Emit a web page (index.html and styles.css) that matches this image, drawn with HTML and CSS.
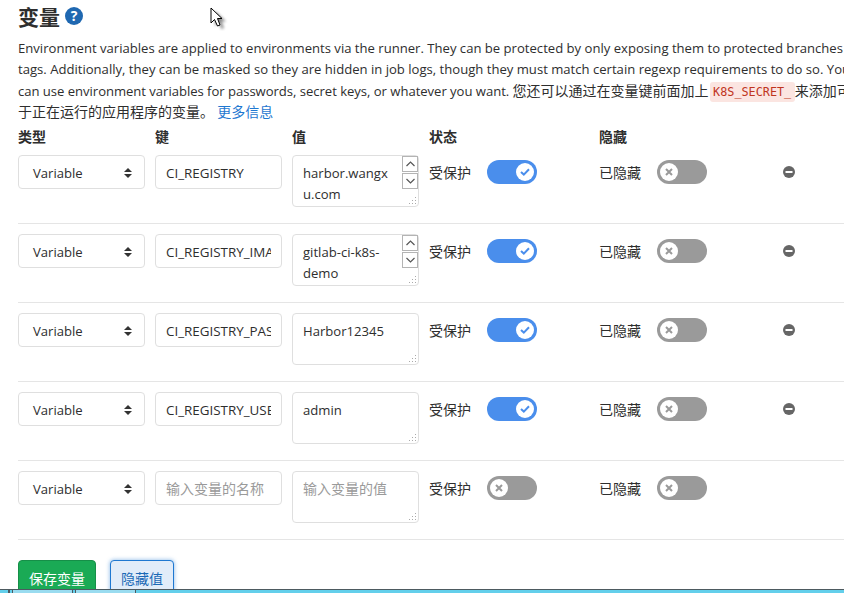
FILE: index.html
```html
<!DOCTYPE html>
<html lang="en">
<head>
<meta charset="UTF-8">
<title>变量</title>
<link rel="stylesheet" href="styles.css">
</head>
<body>
<div class="container">
    <div class="heading">
        <h4>变量</h4>
        <svg class="help" width="18" height="18" viewBox="0 0 18 18"><circle cx="9" cy="9" r="9" fill="#1f68b1"/><text x="9" y="14" text-anchor="middle" class="help-mark">?</text></svg>
    </div>
    <p class="intro">
        <span class="line">Environment variables are applied to environments via the runner. They can be protected by only exposing them to protected branches or</span>
        <span class="line">tags. Additionally, they can be masked so they are hidden in job logs, though they must match certain regexp requirements to do so. You</span>
        <span class="line"><span class="tight">can use environment variables for passwords, secret keys, or whatever you want. </span><span class="cjk">您还可以通过在变量键前面加上</span><code>K8S_SECRET_</code><span class="cjk">来添加可用</span></span>
        <span class="line cjk">于正在运行的应用程序的变量。 <a href="#">更多信息</a></span>
    </p>

    <div class="titles cjk">
        <div class="col-field">类型</div>
        <div class="col-field">键</div>
        <div class="col-field">值</div>
        <div class="col-status">状态</div>
        <div class="col-mask">隐藏</div>
    </div>

    <div class="row">
        <div class="select"><span>Variable</span><svg width="8" height="10" viewBox="0 0 8 10"><path d="M4 0 8 4H0ZM4 10 0 6H8Z" fill="#333"/></svg></div>
        <input class="field" type="text" value="CI_REGISTRY">
        <div class="value-box">
            <textarea class="field value scrolled">harbor.wangxu.com</textarea>
            <div class="spin">
                <div class="spin-btn"><svg width="9" height="6" viewBox="0 0 9 6"><path d="M.5 5 4.500 1 8.500 5" fill="none" stroke="#555" stroke-width="1.200"/></svg></div>
                <div class="spin-btn"><svg width="9" height="6" viewBox="0 0 9 6"><path d="M.5 1 4.500 5 8.500 1" fill="none" stroke="#555" stroke-width="1.200"/></svg></div>
            </div>
        </div>
        <div class="col-status flag cjk">
            <span class="flag-label">受保护</span>
            <div class="toggle on"><div class="knob"><svg width="10" height="8" viewBox="0 0 10 8"><path d="M1 4 3.800 6.600 9 1.200" fill="none" stroke="#4a8eec" stroke-width="2"/></svg></div></div>
        </div>
        <div class="col-mask flag cjk">
            <span class="flag-label">已隐藏</span>
            <div class="toggle"><div class="knob"><svg width="8" height="8" viewBox="0 0 8 8"><path d="M1 1 7 7M7 1 1 7" stroke="#9a9a9a" stroke-width="2"/></svg></div></div>
        </div>
        <svg class="remove" width="12" height="12" viewBox="0 0 12 12"><circle cx="6" cy="6" r="6" fill="#666"/><rect x="2.500" y="5" width="7" height="2" fill="#fff"/></svg>
    </div>

    <div class="row">
        <div class="select"><span>Variable</span><svg width="8" height="10" viewBox="0 0 8 10"><path d="M4 0 8 4H0ZM4 10 0 6H8Z" fill="#333"/></svg></div>
        <input class="field" type="text" value="CI_REGISTRY_IMAGE">
        <div class="value-box">
            <textarea class="field value scrolled">gitlab-ci-k8s-demo</textarea>
            <div class="spin">
                <div class="spin-btn"><svg width="9" height="6" viewBox="0 0 9 6"><path d="M.5 5 4.500 1 8.500 5" fill="none" stroke="#555" stroke-width="1.200"/></svg></div>
                <div class="spin-btn"><svg width="9" height="6" viewBox="0 0 9 6"><path d="M.5 1 4.500 5 8.500 1" fill="none" stroke="#555" stroke-width="1.200"/></svg></div>
            </div>
        </div>
        <div class="col-status flag cjk">
            <span class="flag-label">受保护</span>
            <div class="toggle on"><div class="knob"><svg width="10" height="8" viewBox="0 0 10 8"><path d="M1 4 3.800 6.600 9 1.200" fill="none" stroke="#4a8eec" stroke-width="2"/></svg></div></div>
        </div>
        <div class="col-mask flag cjk">
            <span class="flag-label">已隐藏</span>
            <div class="toggle"><div class="knob"><svg width="8" height="8" viewBox="0 0 8 8"><path d="M1 1 7 7M7 1 1 7" stroke="#9a9a9a" stroke-width="2"/></svg></div></div>
        </div>
        <svg class="remove" width="12" height="12" viewBox="0 0 12 12"><circle cx="6" cy="6" r="6" fill="#666"/><rect x="2.500" y="5" width="7" height="2" fill="#fff"/></svg>
    </div>

    <div class="row">
        <div class="select"><span>Variable</span><svg width="8" height="10" viewBox="0 0 8 10"><path d="M4 0 8 4H0ZM4 10 0 6H8Z" fill="#333"/></svg></div>
        <input class="field" type="text" value="CI_REGISTRY_PASSWORD">
        <div class="value-box"><textarea class="field value">Harbor12345</textarea></div>
        <div class="col-status flag cjk">
            <span class="flag-label">受保护</span>
            <div class="toggle on"><div class="knob"><svg width="10" height="8" viewBox="0 0 10 8"><path d="M1 4 3.800 6.600 9 1.200" fill="none" stroke="#4a8eec" stroke-width="2"/></svg></div></div>
        </div>
        <div class="col-mask flag cjk">
            <span class="flag-label">已隐藏</span>
            <div class="toggle"><div class="knob"><svg width="8" height="8" viewBox="0 0 8 8"><path d="M1 1 7 7M7 1 1 7" stroke="#9a9a9a" stroke-width="2"/></svg></div></div>
        </div>
        <svg class="remove" width="12" height="12" viewBox="0 0 12 12"><circle cx="6" cy="6" r="6" fill="#666"/><rect x="2.500" y="5" width="7" height="2" fill="#fff"/></svg>
    </div>

    <div class="row">
        <div class="select"><span>Variable</span><svg width="8" height="10" viewBox="0 0 8 10"><path d="M4 0 8 4H0ZM4 10 0 6H8Z" fill="#333"/></svg></div>
        <input class="field" type="text" value="CI_REGISTRY_USER">
        <div class="value-box"><textarea class="field value">admin</textarea></div>
        <div class="col-status flag cjk">
            <span class="flag-label">受保护</span>
            <div class="toggle on"><div class="knob"><svg width="10" height="8" viewBox="0 0 10 8"><path d="M1 4 3.800 6.600 9 1.200" fill="none" stroke="#4a8eec" stroke-width="2"/></svg></div></div>
        </div>
        <div class="col-mask flag cjk">
            <span class="flag-label">已隐藏</span>
            <div class="toggle"><div class="knob"><svg width="8" height="8" viewBox="0 0 8 8"><path d="M1 1 7 7M7 1 1 7" stroke="#9a9a9a" stroke-width="2"/></svg></div></div>
        </div>
        <svg class="remove" width="12" height="12" viewBox="0 0 12 12"><circle cx="6" cy="6" r="6" fill="#666"/><rect x="2.500" y="5" width="7" height="2" fill="#fff"/></svg>
    </div>

    <div class="row">
        <div class="select"><span>Variable</span><svg width="8" height="10" viewBox="0 0 8 10"><path d="M4 0 8 4H0ZM4 10 0 6H8Z" fill="#333"/></svg></div>
        <input class="field cjk" type="text" placeholder="输入变量的名称">
        <div class="value-box"><textarea class="field value cjk" placeholder="输入变量的值"></textarea></div>
        <div class="col-status flag cjk">
            <span class="flag-label">受保护</span>
            <div class="toggle"><div class="knob"><svg width="8" height="8" viewBox="0 0 8 8"><path d="M1 1 7 7M7 1 1 7" stroke="#9a9a9a" stroke-width="2"/></svg></div></div>
        </div>
        <div class="col-mask flag cjk">
            <span class="flag-label">已隐藏</span>
            <div class="toggle"><div class="knob"><svg width="8" height="8" viewBox="0 0 8 8"><path d="M1 1 7 7M7 1 1 7" stroke="#9a9a9a" stroke-width="2"/></svg></div></div>
        </div>
    </div>

    <div class="actions">
        <button class="btn-save cjk">保存变量</button>
        <button class="btn-hide cjk">隐藏值</button>
    </div>
</div>

<!-- desktop bits captured in the screenshot -->
<div class="taskbar">
    <div class="task task-first"></div>
    <div class="task"></div>
    <div class="task"></div>
</div>
<svg class="pointer" width="18" height="24" viewBox="0 0 18 24"><defs><filter id="blur"><feGaussianBlur stdDeviation="1.500"/></filter></defs><path d="M3 3V18L6.500 14.500 9.500 21 12 20 9.500 13.500H14Z" fill="#000" opacity=".45" filter="url(#blur)" transform="translate(2 1)"/><path d="M1 1V16L4.500 12.500 7.500 19 10 18 7.500 11.500H12Z" fill="#fff" stroke="#000"/></svg>
</body>
</html>
```

FILE: styles.css
```css
html, body {
    height: 100%;
}
body {
    font-family: "Open Sans", "Noto Sans CJK SC", sans-serif;
    font-size: 13.100px;
    color: #2e2e2e;
    margin: 0;
    background-color: #fff;
    overflow: hidden;
}
.cjk {
    font-family: "Noto Sans CJK SC", sans-serif;
    font-size: 14px;
}
.tight {
    letter-spacing: -.035px;
}
.container {
    width: 900px;
    padding: 3px 0 0 18px;
}
.heading {
    display: flex;
    align-items: center;
    height: 26px;
    gap: 5px;
}
h4 {
    margin: 0;
    font-size: 21px;
    font-weight: 700;
    font-family: "Noto Sans CJK SC", sans-serif;
}
.help-mark {
    font-family: "Open Sans", sans-serif;
    font-size: 14px;
    font-weight: 700;
    fill: #fff;
}
.intro {
    margin: 9px 0 0;
    line-height: 21px;
}
.line {
    display: block;
    height: 21px;
    white-space: nowrap;
}
a {
    color: #1f78d1;
    text-decoration: none;
}
code {
    font-family: "DejaVu Sans Mono", monospace;
    font-size: 11.800px;
    color: #c0341d;
    background-color: #fbe5e1;
    border-radius: 3px;
    padding: 3px 3.500px;
    margin: 0 0 0 1px;
}
.titles {
    display: flex;
    margin-top: 3px;
    height: 22px;
    line-height: 22px;
    font-weight: 700;
    align-items: center;
}
.col-field {
    width: 127px;
    margin-right: 10px;
}
.col-status {
    width: 170px;
    flex: none;
}
.col-mask {
    width: 184px;
    flex: none;
}
.row {
    display: flex;
    align-items: flex-start;
    width: 844px;
    padding-bottom: 16px;
    margin-bottom: 9px;
    border-bottom: 1px solid #e5e5e5;
}
.titles + .row {
    margin-top: 8px;
}
.row + .row {
    padding-top: 1px;
}
.select, .field {
    width: 127px;
    height: 34px;
    margin-right: 10px;
    box-sizing: border-box;
    border: 1px solid #dfdfdf;
    border-radius: 4px;
    color: #2e2e2e;
    background-color: #fff;
    flex: none;
}
.field {
    font-family: "Open Sans", sans-serif;
    font-size: 13.400px;
    padding: 1px 10px 0;
    outline: none;
}
.field.cjk {
    font-family: "Noto Sans CJK SC", sans-serif;
    font-size: 14px;
    padding-top: 0;
}
.select {
    display: flex;
    align-items: center;
    justify-content: space-between;
    padding: 1px 12px 0 14px;
}
.field::placeholder {
    color: #9a9a9a;
}
.value-box {
    position: relative;
    width: 127px;
    height: 52px;
    margin-right: 10px;
    flex: none;
}
/* dotted resize grip, the native one draws diagonal lines */
.value-box::after {
    content: "";
    position: absolute;
    right: 3px;
    bottom: 3px;
    width: 1px;
    height: 1px;
    background-color: #aaa;
    box-shadow: -3px 0 #aaa, -6px 0 #aaa, 0 -3px #aaa, -3px -3px #aaa, 0 -6px #aaa;
}
.field.value {
    display: block;
    height: 52px;
    margin: 0;
    padding: 7px 10px;
    font-size: 13.100px;
    line-height: 21px;
    overflow: hidden;
    resize: none;
}
.field.value.cjk {
    font-size: 14px;
    padding-top: 6px;
}
.field.scrolled {
    padding-right: 24px;
}
.spin {
    position: absolute;
    top: 1px;
    right: 1px;
    width: 16px;
}
.spin-btn {
    height: 16px;
    margin-bottom: 1px;
    box-sizing: border-box;
    border: 1px solid #b4b4b4;
    background-color: #fff;
    display: flex;
    align-items: center;
    justify-content: center;
}
.flag {
    display: flex;
    align-items: center;
    height: 34px;
}
.flag-label {
    width: 58px;
}
.toggle {
    width: 50px;
    height: 24px;
    box-sizing: border-box;
    padding: 3px;
    border-radius: 12px;
    background-color: #9a9a9a;
    display: flex;
}
.toggle.on {
    background-color: #4a8eec;
    justify-content: flex-end;
}
.knob {
    width: 18px;
    height: 18px;
    border-radius: 50%;
    background-color: #fff;
    display: flex;
    align-items: center;
    justify-content: center;
}
.remove {
    margin: 11px 0 0 0;
    flex: none;
}
.actions {
    display: flex;
    gap: 14px;
    margin-top: 20px;
}
button {
    height: 35px;
    border-radius: 4px;
    padding: 0 10px;
    cursor: pointer;
}
.btn-save {
    width: 78px;
    border: 1px solid #168f48;
    background-color: #1aaa55;
    color: #fff;
}
.btn-hide {
    width: 64px;
    border: 1px solid #1f78d1;
    background-color: #e1ecf9;
    color: #1b69b6;
    box-shadow: 0 0 4px rgba(31, 120, 209, .55);
}
.taskbar {
    position: fixed;
    left: 0;
    right: 0;
    bottom: 0;
    height: 3px;
    display: flex;
    border-top: 1px solid #4d5a60;
    background-color: #63cfeb;
    padding-left: 11px;
}
.task {
    width: 59px;
    margin-right: 2px;
    background-color: #9adcf0;
    border-left: 1px solid #4d5a60;
    border-right: 1px solid #4d5a60;
}
.task-first {
    width: 0;
    margin-left: -3px;
    margin-right: 2px;
}
.pointer {
    position: absolute;
    left: 210px;
    top: 7px;
}
```
